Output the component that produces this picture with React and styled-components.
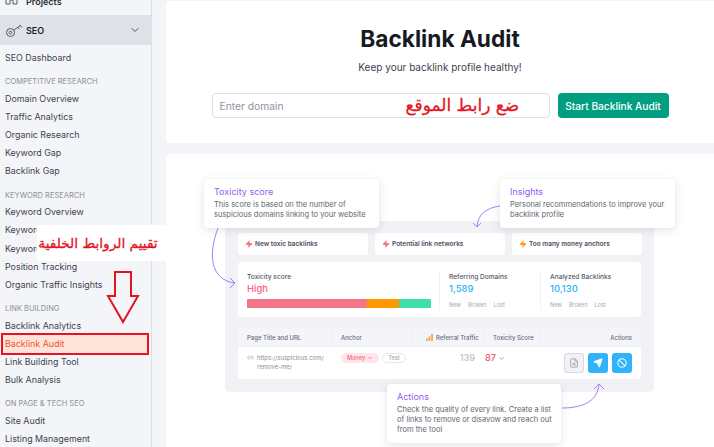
import React from "react";
import styled, { createGlobalStyle } from "styled-components";
import { ChevronDown, Link2, FileSearch, Send, Ban, Zap } from "lucide-react";

const Global = createGlobalStyle`
  html, body { margin: 0; padding: 0; background: #f4f5f9; }
  body { font-family: Inter, "Liberation Sans", sans-serif; }
  * { box-sizing: border-box; }
`;

const Page = styled.div`
  position: relative; width: 714px; height: 447px; overflow: hidden;
  display: flex; background: #f4f5f9;
`;
const Sidebar = styled.aside`
  width: 152px; flex: none; height: 447px; border-right: 1px solid #dcdee5;
  background: #f4f5f9; position: relative; overflow: hidden;
`;
const TopItem = styled.div`
  height: 16px; margin-top: -7px; display: flex; align-items: center; gap: 8px; padding-left: 5px;
  font-size: 9px; font-weight: 600; color: #2a2e38;
`;
const SeoBand = styled.div`
  margin-top: 6px; height: 30px; background: #dfe1e8; display: flex; align-items: center;
  padding: 0 10px 0 5px; gap: 2px; font-size: 9px; font-weight: 600; color: #1c1f26;
  & > span { flex: 1; }
`;
const NavGroup = styled.div`
  display: flex; flex-direction: column; padding-top: ${p => p.$top || 0}px;
`;
const NavHead = styled.div`
  height: 15.5px; line-height: 15.5px; padding-left: 5px; font-size: 7.5px; color: #8b8f9c;
`;
const NavItem = styled.div`
  height: 18.2px; line-height: 18.2px; padding-left: 5px; font-size: 8.9px; color: #3e424f; white-space: nowrap;
`;
const ActiveItem = styled.div`
  height: 22px; margin: -2px 2px -2px 1px; line-height: 17.5px; padding-left: 2px; font-size: 8.9px;
  color: #f2552c; background: #ffe4da; border: 2px solid #ea1026; white-space: nowrap;
`;
const Note = styled.div`
  position: absolute; left: 37px; top: 225px; width: 130px; height: 36px; background: #fff; z-index: 3;
  display: flex; align-items: center; justify-content: center; direction: rtl; padding-right: 8px;
  font-family: "DejaVu Sans", sans-serif; font-size: 13.7px; -webkit-text-stroke: 0.3px #e3141f; color: #e3141f; white-space: nowrap;
`;
const DownArrow = styled.svg`
  position: absolute; left: 106px; top: 270px; z-index: 3;
`;

const Main = styled.main`
  flex: 1; display: flex; flex-direction: column; padding: 1px 0 0 14px; gap: 11px; min-width: 0;
`;
const HeroCard = styled.section`
  height: 142px; background: #fff; border-radius: 4px 0 0 4px; display: flex; flex-direction: column; align-items: center;
  padding-top: 23px;
`;
const Title = styled.h1`
  margin: 0; font-size: 22.7px; line-height: 30px; font-weight: 700; color: #171a22;
`;
const Subtitle = styled.p`
  margin: 5px 0 0; font-size: 10px; line-height: 16px; color: #3e424f;
`;
const Form = styled.div`
  margin-top: 18px; display: flex; gap: 8px; width: 457px; height: 25px;
`;
const Field = styled.div`
  position: relative; flex: 1; border: 1px solid #dcdfe8; border-radius: 4px; display: flex; align-items: center;
  padding-left: 7px; font-size: 10.3px; color: #8f94a1; background: #fff;
`;
const FieldNote = styled.span`
  position: absolute; left: 193px; top: 0; font-family: "DejaVu Sans", sans-serif; font-size: 17px; line-height: 22px;
  -webkit-text-stroke: 0.3px #e3141f; direction: rtl; color: #e3141f; white-space: nowrap;
`;
const Cta = styled.div`
  width: 111px; background: #009f81; color: #fff; border-radius: 4px; font-size: 10.2px; font-weight: 500;
  display: flex; align-items: center; justify-content: center;
`;
const PreviewCard = styled.section`
  position: relative; flex: 1; background: #fff; border-radius: 4px 0 0 0; padding: 67px 0 0 59px;
`;
const Panel = styled.div`
  width: 429px; height: 171px; background: #f1f1f6; border-radius: 5px; padding: 12px 13px; display: flex; flex-direction: column;
`;
const Tiles = styled.div`
  display: grid; grid-template-columns: 130px 130px 130px; gap: 7px; height: 22px;
`;
const Tile = styled.div`
  background: #fff; border-radius: 3px; display: flex; align-items: center; gap: 2px; padding-left: 7px;
  font-size: 6.5px; font-weight: 600; color: #4b4e5a; white-space: nowrap;
`;
const ScoreCard = styled.div`
  margin-top: 7px; height: 55px; background: #fff; border-radius: 3px; display: grid; grid-template-columns: 202px 101px 100px;
`;
const ScoreCol = styled.div`
  padding: 11px 0 0 ${p => p.$pad}px; position: relative;
  &::after {
    content: ""; position: absolute; right: 0; top: 8px; bottom: 6px; width: 1px;
    background: ${p => p.$line ? "#f2f2f6" : "transparent"};
  }
`;
const Label = styled.div`
  font-size: 6.6px; line-height: 9px; font-weight: 500; color: #55586a; white-space: nowrap;
`;
const Metric = styled.div`
  margin-top: 1px; font-size: 9.5px; line-height: 12px; font-weight: 500; color: ${p => p.$c};
`;
const Bar = styled.div`
  margin-top: 4px; display: flex; height: 9px; width: 184px; border-radius: 1px; overflow: hidden;
`;
const Seg = styled.div`
  width: ${p => p.$w}px; background: ${p => p.$c};
`;
const Minor = styled.div`
  margin-top: 6px; display: flex; gap: 7px; font-size: 5.6px; line-height: 8px; color: #a6a8b4;
`;
const Table = styled.div`
  margin-top: 11px; height: 51px; background: #fff; border-radius: 3px; overflow: hidden;
`;
const Row = styled.div`
  display: grid; grid-template-columns: 94px 81px 71px 56px 101px;
`;
const HeadRow = styled(Row)`
  height: 19px; background: #f4f5f9; border-bottom: 1px solid #eceef3;
`;
const Th = styled.div`
  display: flex; align-items: center; gap: 3px; padding: ${p => p.$end ? "0 9px 0 0" : "0 0 0 " + (p.$pad || 9) + "px"};
  justify-content: ${p => p.$end ? "flex-end" : "flex-start"};
  border-right: ${p => p.$end ? "none" : "1px solid #eceef3"};
  font-size: 6px; font-weight: 500; color: #6a6d7a; white-space: nowrap;
`;
const Td = styled.div`
  display: flex; align-items: flex-start; gap: 3px; padding: 6px ${p => p.$r || 0}px 0 ${p => p.$l || 0}px;
  justify-content: ${p => p.$end ? "flex-end" : "flex-start"};
`;
const Url = styled.div`
  font-size: 6px; line-height: 9px; color: #8b8e99;
`;
const Pill = styled.div`
  height: 10px; border-radius: 5px; display: flex; align-items: center; justify-content: center; gap: 2px;
  width: ${p => p.$w}px; font-size: 5.6px; font-weight: 500;
  background: ${p => p.$bg}; color: ${p => p.$c}; border: ${p => p.$b ? "1px solid #e6e7ec" : "none"};
`;
const Traffic = styled.div`
  margin-top: 0; font-size: 9px; line-height: 10px; font-weight: 600; color: #c3c5cc;
`;
const Score = styled.div`
  display: flex; align-items: center; gap: 2px; margin-left: -28px; font-size: 9px; line-height: 10px; font-weight: 600; color: #f4687e;
`;
const Actions = styled.div`
  display: flex; gap: 4px;
`;
const ActionBtn = styled.div`
  width: 20px; height: 20px; border-radius: 3px; display: flex; align-items: center; justify-content: center;
  background: ${p => p.$ghost ? "#f2f3f6" : "#2fb3fb"}; color: ${p => p.$ghost ? "#9a9da8" : "#fff"};
  border: ${p => p.$ghost ? "1px solid #d7d9e0" : "none"};
`;
const Callout = styled.div`
  position: absolute; left: ${p => p.$x}px; top: ${p => p.$y}px; width: ${p => p.$w}px; height: ${p => p.$h}px; z-index: 2;
  background: #fff; border-radius: 4px; padding: 7px 10px; box-shadow: 0 2px 8px rgba(40, 40, 70, .13);
`;
const CalloutTitle = styled.div`
  font-size: 9px; line-height: 12px; color: #8f5cf0;
`;
const CalloutBody = styled.div`
  margin-top: 2px; font-size: 7.5px; line-height: 10px; color: #63666f; white-space: nowrap;
`;
const Curve = styled.svg`
  position: absolute; left: 0; top: 0; z-index: 2; pointer-events: none;
`;

const KeyIcon = () => (
  <svg width="19" height="15" viewBox="0 0 19 15" fill="none" stroke="#555a66" strokeWidth="1">
    <circle cx="5.5" cy="9.5" r="4" />
    <circle cx="5.5" cy="9.5" r="1.4" />
    <path d="M9 7l7-5M13 4.2l1.4 2M15.4 2.4l1.3 2" />
  </svg>
);
const HomeIcon = () => (
  <svg width="13" height="12" viewBox="0 0 13 12" fill="none" stroke="#555a66" strokeWidth="1">
    <path d="M1 1v8h4V5h3v4h4V1" />
  </svg>
);
const Bolt = ({ c }) => <Zap size={8} color={c} fill={c} strokeWidth={1} />;
const Bars = () => (
  <svg width="7" height="7" viewBox="0 0 7 7" fill="#f2a33a">
    <rect x="0" y="4.5" width="1.7" height="2.5" /><rect x="2.6" y="2.4" width="1.7" height="4.6" /><rect x="5.2" y="0" width="1.7" height="7" />
  </svg>
);

const competitive = ["Domain Overview", "Traffic Analytics", "Organic Research", "Keyword Gap", "Backlink Gap"];
const keyword = ["Keyword Overview", "Keyword Magic Tool", "Keyword Manager", "Position Tracking", "Organic Traffic Insights"];

export default function App() {
  return (
    <Page>
      <Global />
      <Sidebar>
        <TopItem><HomeIcon />Projects</TopItem>
        <SeoBand><KeyIcon /><span>SEO</span><ChevronDown size={12} color="#555a66" /></SeoBand>
        <NavGroup $top={4}><NavItem>SEO Dashboard</NavItem></NavGroup>
        <NavGroup $top={7}>
          <NavHead>COMPETITIVE RESEARCH</NavHead>
          {competitive.map(t => <NavItem key={t}>{t}</NavItem>)}
        </NavGroup>
        <NavGroup $top={7}>
          <NavHead>KEYWORD RESEARCH</NavHead>
          {keyword.map(t => <NavItem key={t}>{t}</NavItem>)}
        </NavGroup>
        <NavGroup $top={7}>
          <NavHead>LINK BUILDING</NavHead>
          <NavItem>Backlink Analytics</NavItem>
          <ActiveItem>Backlink Audit</ActiveItem>
          <NavItem>Link Building Tool</NavItem>
          <NavItem>Bulk Analysis</NavItem>
        </NavGroup>
        <NavGroup $top={7}>
          <NavHead>ON PAGE &amp; TECH SEO</NavHead>
          <NavItem>Site Audit</NavItem>
          <NavItem>Listing Management</NavItem>
        </NavGroup>
      </Sidebar>
      <Note>تقييم الروابط الخلفية</Note>
      <DownArrow width="34" height="54" viewBox="0 0 34 54" fill="none" stroke="#e3141f" strokeWidth="2">
        <path d="M9 2h16v24h7L17 52 2 26h7z" />
      </DownArrow>
      <Main>
        <HeroCard>
          <Title>Backlink Audit</Title>
          <Subtitle>Keep your backlink profile healthy!</Subtitle>
          <Form>
            <Field>Enter domain<FieldNote>ضع رابط الموقع</FieldNote></Field>
            <Cta>Start Backlink Audit</Cta>
          </Form>
        </HeroCard>
        <PreviewCard>
          <Panel>
            <Tiles>
              <Tile><Bolt c="#f4687e" />New toxic backlinks</Tile>
              <Tile><Bolt c="#f4687e" />Potential link networks</Tile>
              <Tile><Bolt c="#ff9800" />Too many money anchors</Tile>
            </Tiles>
            <ScoreCard>
              <ScoreCol $pad={9} $line>
                <Label>Toxicity score</Label>
                <Metric $c="#f4687e">High</Metric>
                <Bar><Seg $w={120} $c="#f4748a" /><Seg $w={32} $c="#ff9800" /><Seg $w={32} $c="#3fdfa8" /></Bar>
              </ScoreCol>
              <ScoreCol $pad={9} $line>
                <Label>Referring Domains</Label>
                <Metric $c="#2fb3fb">1,589</Metric>
                <Minor><span>New</span><span>Broken</span><span>Lost</span></Minor>
              </ScoreCol>
              <ScoreCol $pad={9}>
                <Label>Analyzed Backlinks</Label>
                <Metric $c="#2fb3fb">10,130</Metric>
                <Minor><span>New</span><span>Broken</span><span>Lost</span></Minor>
              </ScoreCol>
            </ScoreCard>
            <Table>
              <HeadRow>
                <Th>Page Title and URL</Th>
                <Th>Anchor</Th>
                <Th $pad={13}><Bars />Referral Traffic</Th>
                <Th>Toxicity Score</Th>
                <Th $end>Actions</Th>
              </HeadRow>
              <Row>
                <Td $l={9}><Link2 size={7} color="#a6a8b4" style={{ marginTop: 1 }} /><Url>https://suspicious.com/<br />remove-me/</Url></Td>
                <Td $l={9}>
                  <Pill $w={38} $bg="#ffe6ea" $c="#f4687e">Money <ChevronDown size={6} strokeWidth={3} /></Pill>
                  <Pill $w={24} $bg="#fff" $c="#a6a8b4" $b>Text</Pill>
                </Td>
                <Td $end $r={9}><Traffic>139</Traffic></Td>
                <Td $l={29}><Score>87 <ChevronDown size={7} strokeWidth={3} /></Score></Td>
                <Td $end $r={9}>
                  <Actions>
                    <ActionBtn $ghost><FileSearch size={10} /></ActionBtn>
                    <ActionBtn><Send size={10} fill="#fff" /></ActionBtn>
                    <ActionBtn><Ban size={10} strokeWidth={2.5} /></ActionBtn>
                  </Actions>
                </Td>
              </Row>
            </Table>
          </Panel>
          <Callout $x={38} $y={25} $w={175} $h={49}>
            <CalloutTitle>Toxicity score</CalloutTitle>
            <CalloutBody>This score is based on the number of<br />suspicious domains linking to your website</CalloutBody>
          </Callout>
          <Callout $x={334} $y={25} $w={175} $h={49}>
            <CalloutTitle>Insights</CalloutTitle>
            <CalloutBody>Personal recommendations to improve your<br />backlink profile</CalloutBody>
          </Callout>
          <Callout $x={221} $y={230} $w={174} $h={59}>
            <CalloutTitle>Actions</CalloutTitle>
            <CalloutBody>Check the quality of every link. Create a list<br />of links to remove or disavow and reach out<br />from the tool</CalloutBody>
          </Callout>
          <Curve width="548" height="293" viewBox="0 0 548 293" fill="none" stroke="#a97cf5" strokeWidth="1">
            <path d="M52 74C42 100 44 126 69 129M64 124l5 5-5 5" />
            <path d="M334 52C320 54 312 60 311 73M307 69l4 4 4-4" />
            <path d="M396 254C420 254 432 245 433 230M428 235l5-5 5 5" />
          </Curve>
        </PreviewCard>
      </Main>
    </Page>
  );
}
